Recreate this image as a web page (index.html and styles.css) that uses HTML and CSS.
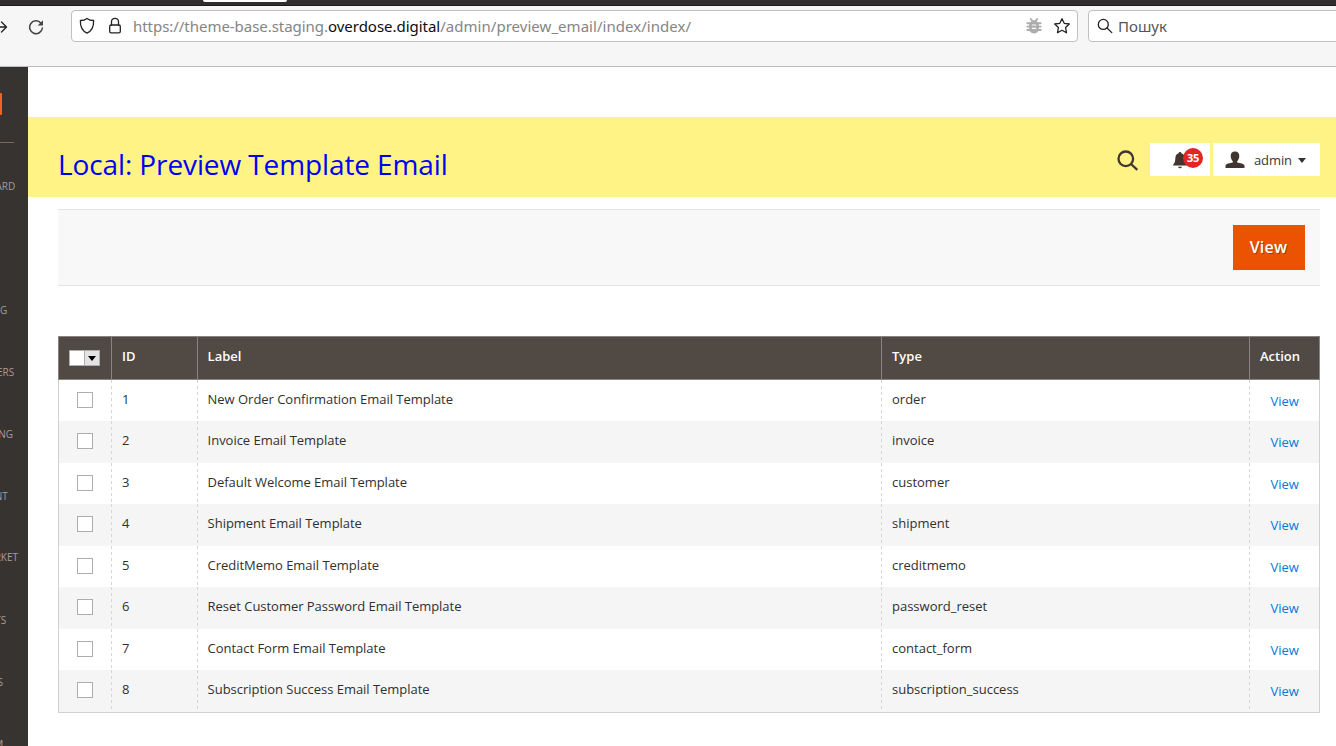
FILE: index.html
```html
<!DOCTYPE html>
<html lang="uk">
<head>
<meta charset="utf-8">
<title>Preview Template Email</title>
<link rel="stylesheet" href="styles.css">
</head>
<body>
<div class="tabstrip"><div class="tab"></div></div>
<div class="toolbar">
  <svg class="forward" width="10" height="16" viewBox="0 0 10 16"><path d="M0 8H6.3M1.5 3L6.5 8L1.5 13"/></svg>
  <svg class="reload" width="16" height="16" viewBox="0 0 16 16"><path class="line" d="M13 4.2A6.4 6.4 0 1 0 14.4 9"/><path class="solid" d="M15 1.3V6.4H9.7Z"/></svg>
  <div class="urlbar">
    <svg class="shield" width="16" height="18" viewBox="0 0 16 18"><path d="M8 1.4C10 3 12.300 3.500 14.600 3.500C14.900 9.500 13 13.700 8 16.200C3 13.700 1.100 9.500 1.400 3.500C3.700 3.500 6 3 8 1.400Z"/></svg>
    <svg class="lock" width="14" height="18" viewBox="0 0 14 18"><rect x="1.700" y="8" width="10.600" height="7.800" rx="1.400"/><path d="M3.500 8V4.800A3.500 3.500 0 0 1 10.500 4.800V8"/></svg>
    <div class="url"><span class="u1">https://theme-base.staging.</span><span class="host">overdose.digital</span><span class="u2">/admin/preview_email/index/index/</span></div>
    <svg class="bug" width="16" height="18" viewBox="0 0 16 18"><path class="solid" d="M4.500 5Q8 1.500 11.500 5Q13 6.500 13 9.500Q13 16.500 8 16.500Q3 16.500 3 9.500Q3 6.500 4.500 5Z"/><path class="legs" d="M1.300 6.200H14.700M1.300 9.600H14.700M1.300 13H14.700M4.800 2L6.300 4M11.200 2L9.700 4"/><path class="bars" d="M6.300 8H9.700M6.300 11.300H9.700"/></svg>
    <svg class="star" width="18" height="18" viewBox="0 0 18 18"><path d="M9 1.700L11.200 6.300L16.300 7L12.600 10.500L13.500 15.800L9 13.300L4.500 15.800L5.400 10.500L1.700 7L6.800 6.300Z"/></svg>
  </div>
  <div class="searchbar">
    <svg width="16" height="16" viewBox="0 0 16 16"><circle cx="6.300" cy="6.400" r="5"/><path d="M10 10L14.800 14.600"/></svg>
    <span>Пошук</span>
  </div>
</div>
<div class="page">
  <nav class="sidebar">
    <div class="logo"></div>
    <div class="rule"></div>
    <ul class="menu">
      <li>DASHBOARD</li><li>SALES</li><li>CATALOG</li><li>CUSTOMERS</li><li>MARKETING</li><li>CONTENT</li><li class="wide">MARKET</li><li>REPORTS</li><li>STORES</li><li>SYSTEM</li>
    </ul>
  </nav>
  <main class="content">
    <header class="banner">
      <h1>Local: Preview Template Email</h1>
      <svg class="find" width="22" height="22" viewBox="0 0 22 22"><circle cx="8.800" cy="8.800" r="7.300"/><path d="M14 14L20.300 19.800"/></svg>
      <div class="bell">
        <svg width="16" height="18" viewBox="0 0 16 18"><path d="M8 1C9 1 9.300 1.700 9.300 2.300C12 3 12.700 5 12.700 8C12.700 11 14 12.500 15.200 14.500H.8C2 12.500 3.300 11 3.300 8C3.300 5 4 3 6.700 2.300C6.700 1.700 7 1 8 1ZM6 15.700H10Q9.500 17.300 8 17.300Q6.500 17.300 6 15.700Z"/></svg>
        <span class="badge">35</span>
      </div>
      <div class="user">
        <svg width="20" height="18" viewBox="0 0 20 18"><path d="M10 .5C13 .5 14.300 2.500 14.300 5C14.300 7.500 13 9.500 12.200 10.200V11.500C15 12.500 19.500 12.300 19.500 15V17H.5V15C.5 12.300 5 12.500 7.800 11.500V10.200C7 9.500 5.700 7.500 5.700 5C5.700 2.500 7 .5 10 .5Z"/></svg>
        <span>admin</span><i class="caret"></i>
      </div>
    </header>
    <div class="actions"><button class="primary">View</button></div>
    <div class="grid">
      <div class="row head"><div class="check"><span class="multi"><i></i><b><i class="caret"></i></b></span></div><div>ID</div><div>Label</div><div>Type</div><div>Action</div></div>
      <div class="row"><div class="check"><i class="box"></i></div><div>1</div><div>New Order Confirmation Email Template</div><div>order</div><div class="act"><a>View</a></div></div>
      <div class="row"><div class="check"><i class="box"></i></div><div>2</div><div>Invoice Email Template</div><div>invoice</div><div class="act"><a>View</a></div></div>
      <div class="row"><div class="check"><i class="box"></i></div><div>3</div><div>Default Welcome Email Template</div><div>customer</div><div class="act"><a>View</a></div></div>
      <div class="row"><div class="check"><i class="box"></i></div><div>4</div><div>Shipment Email Template</div><div>shipment</div><div class="act"><a>View</a></div></div>
      <div class="row"><div class="check"><i class="box"></i></div><div>5</div><div>CreditMemo Email Template</div><div>creditmemo</div><div class="act"><a>View</a></div></div>
      <div class="row"><div class="check"><i class="box"></i></div><div>6</div><div>Reset Customer Password Email Template</div><div>password_reset</div><div class="act"><a>View</a></div></div>
      <div class="row"><div class="check"><i class="box"></i></div><div>7</div><div>Contact Form Email Template</div><div>contact_form</div><div class="act"><a>View</a></div></div>
      <div class="row"><div class="check"><i class="box"></i></div><div>8</div><div>Subscription Success Email Template</div><div>subscription_success</div><div class="act"><a>View</a></div></div>
    </div>
  </main>
</div>
</body>
</html>
```
FILE: styles.css
```css
* { box-sizing: border-box; }
body { margin: 0; width: 1336px; height: 746px; overflow: hidden; background: #fff; font-family: "Open Sans", sans-serif; color: #303030; }
svg { display: block; flex: none; fill: none; }
i { display: block; }

.tabstrip { height: 6px; background: #2f2d2e; border-bottom: 1px solid #1d1b1c; }
.tab { width: 84px; height: 2px; margin-left: 203px; background: #fff; border-radius: 0 0 3px 3px; }
.toolbar { display: flex; height: 61px; padding-top: 4px; background: #f6f6f6; border-bottom: 1px solid #bdbdbd; overflow: hidden; font-family: "Noto Sans", sans-serif; }
.toolbar svg { stroke: #222; stroke-width: 1.3; stroke-linejoin: round; stroke-linecap: round; }
.forward { margin-top: 9px; }
.reload { margin: 9px 0 0 18px; }
.toolbar .reload { stroke: #444; stroke-width: 1.5; }
.reload .solid { fill: #444; stroke: none; }
.urlbar { display: flex; align-items: center; flex: none; width: 1007px; height: 32px; margin-left: 27px; padding-left: 7px; background: #fff; border: 1px solid #bfbfbf; border-radius: 4px; }
.lock { margin-left: 13px; }
.url { width: 893px; margin-left: 11px; font-size: 15px; line-height: 24px; color: #858585; white-space: nowrap; }
.host { color: #0c0c0d; letter-spacing: -.03px; }
.u1 { letter-spacing: -.04px; }
.u2 { letter-spacing: .04px; }
.toolbar .bug { stroke: #adadad; stroke-width: 1.900; }
.bug .solid { fill: #adadad; stroke: none; }
.toolbar .bug .bars { stroke: #fff; stroke-width: 1.200; }
.star { margin-left: 11px; }
.searchbar { display: flex; align-items: center; flex: none; width: 260px; height: 32px; margin-left: 10px; padding-left: 8px; gap: 5px; background: #fff; border: 1px solid #bfbfbf; border-radius: 4px; font-size: 15px; color: #555; }

.page { display: flex; height: 679px; }
.sidebar { flex: none; width: 28px; background: #373330; overflow: hidden; }
.logo { width: 2px; height: 22px; margin-top: 26px; background: #f26322; border-radius: 0 1px 1px 0; }
.rule { width: 14px; height: 1px; margin-top: 27px; background: #736963; }
.menu { width: 90px; margin: 12px 0 0 -60px; padding: 0; list-style: none; font-size: 10px; line-height: 14px; color: #a79d95; text-align: center; }
.menu li { height: 62px; padding-top: 24px; }
.menu .wide { padding: 23px 12px 0 0; text-align: right; }

.content { flex: 1; padding-top: 50px; }
.banner { display: flex; height: 80px; padding: 26px 16px 0 30px; background: #fff385; }
h1 { flex: 1; margin: 2px 0 0; font-size: 28px; line-height: 38px; letter-spacing: -.11px; font-weight: 400; color: #0000f5; white-space: nowrap; }
.find { margin: 7px 11px 0 0; stroke: #41362f; stroke-width: 2.300; }
.bell { position: relative; width: 60px; height: 33px; padding: 8px 0 0 22px; background: #fff; }
.bell svg, .user svg { fill: #41362f; }
.badge { position: absolute; left: 33px; top: 5px; width: 20px; height: 20px; border-radius: 50%; background: #e22626; color: #fff; font-size: 11px; line-height: 20px; font-weight: 700; letter-spacing: -.3px; text-align: center; }
.user { display: flex; align-items: center; width: 107px; height: 33px; margin-left: 3px; padding-left: 12px; background: #fff; font-size: 13px; color: #41362f; }
.user span { margin: 0 6px 0 9px; letter-spacing: -.1px; }
.caret { width: 0; height: 0; border: 4px solid transparent; border-top: 5px solid #333; border-bottom: 0; }
.user .caret { margin-top: 1px; }
.actions { display: flex; justify-content: flex-end; height: 77px; margin: 12px 16px 50px 30px; padding: 15px 15px 0 0; background: #f8f8f8; border-top: 1px solid #e3e3e3; border-bottom: 1px solid #e3e3e3; }
.primary { width: 72px; height: 45px; padding: 0 1px 2px 0; border: 0; background: #eb5202; color: #fff; font: 600 16px "Open Sans", sans-serif; letter-spacing: .25px; text-shadow: 1px 1px 0 rgba(0,0,0,.3); }

.grid { width: 1262px; height: 377px; margin-left: 30px; border: solid #d1d1d1; border-width: 0 1px 1px; font-size: 13px; line-height: 18px; }
.row { display: grid; grid-template-columns: 52px 86px 684px 368px 70px; height: 41.5px; }
.row:nth-child(odd) { background: #f5f5f5; }
.row:last-child { height: 42px; }
.row > div { padding: 10.300px 0 0 11px; white-space: nowrap; }
.row > div:nth-child(3) { padding-left: 10.600px; letter-spacing: -.03px; }
.row > div + div { background: repeating-linear-gradient(#d6d6d6 0 3px, transparent 3px 6px) 0 0 / 1px 100% no-repeat; }
.row.head { height: 43.700px; margin: 0 -1px; background: #514943; border: 1px solid #8a837f; color: #fff; font-weight: 600; }
.row.head > div { padding-top: 10px; }
.row.head > div + div { background: linear-gradient(#8a837f, #8a837f) 0 0 / 1px 100% no-repeat; }
.row .check { padding: 12px 0 0 18px; }
.box { width: 16px; height: 16px; background: #fff; border: 1px solid #adadad; }
.row.head .check { padding: 13px 0 0 10px; }
.multi { display: flex; width: 31px; height: 16px; border: 1px solid #adadad; background: #fff; }
.multi > i { width: 14px; }
.multi b { flex: 1; padding: 5px 0 0 3px; border-left: 1px solid #adadad; background: #e3e3e3; }
.multi .caret { border-top-color: #000; }
.row .act { padding: 12.300px 0 0 21.500px; }
.act a { color: #007bdb; }
```
